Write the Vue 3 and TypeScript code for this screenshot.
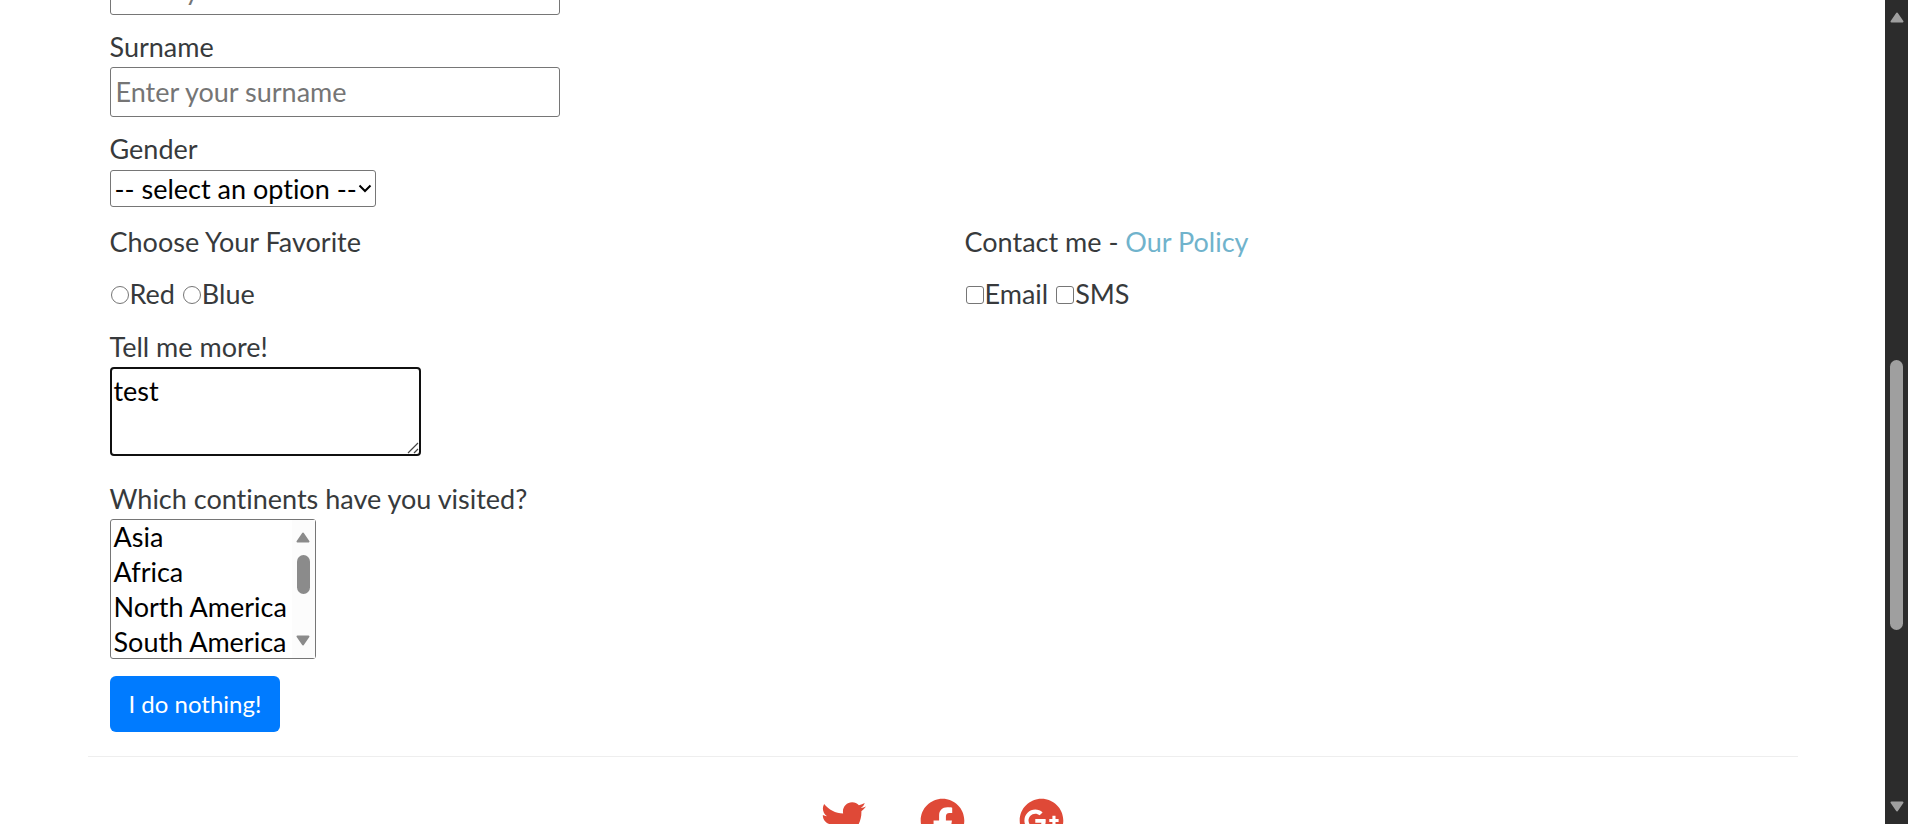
<script setup lang="ts">
import { ref } from 'vue'

const firstName = ref('')
const surname = ref('')
const gender = ref('')
const favorite = ref('')
const contact = ref<string[]>([])
const about = ref('test')
const visited = ref<string[]>([])

const genders = ['Male', 'Female', 'Other']
const colours = ['Red', 'Blue']
const channels = ['Email', 'SMS']
const continents = [
  'Asia', 'Africa', 'North America', 'South America', 'Antarctica',
  'Europe', 'Australia', 'Oceania',
]

const socials = [
  {
    name: 'Twitter',
    path: 'M459.37 151.716c.325 4.548.325 9.097.325 13.645 0 138.72-105.583 298.558-298.558 298.558-59.452 0-114.68-17.219-161.137-47.106 8.447.974 16.568 1.299 25.34 1.299 49.055 0 94.213-16.568 130.274-44.832-46.132-.975-84.792-31.188-98.112-72.772 6.498.974 12.995 1.624 19.818 1.624 9.421 0 18.843-1.3 27.614-3.573-48.081-9.747-84.143-51.98-84.143-102.985v-1.299c13.969 7.797 30.214 12.67 47.431 13.319-28.264-18.843-46.781-51.005-46.781-87.391 0-19.492 5.197-37.36 14.294-52.954 51.655 63.675 129.3 105.258 216.365 109.807-1.624-7.797-2.599-15.918-2.599-24.04 0-57.828 46.782-104.934 104.934-104.934 30.213 0 57.502 12.67 76.67 33.137 23.715-4.548 46.456-13.32 66.599-25.34-7.798 24.366-24.366 44.833-46.132 57.827 21.117-2.273 41.584-8.122 60.426-16.243-14.292 20.791-32.161 39.308-52.628 54.253z',
  },
  {
    name: 'Facebook',
    path: 'M504 256C504 119 393 8 256 8S8 119 8 256c0 123.78 90.69 226.38 209.25 245V327.69h-63V256h63v-54.64c0-62.15 37-96.48 93.67-96.48 27.14 0 55.52 4.84 55.52 4.84v61h-31.28c-30.8 0-40.41 19.12-40.41 38.73V256h68.78l-11 71.69h-57.78V501C413.31 482.38 504 379.78 504 256z',
  },
  {
    name: 'Google Plus',
    path: 'M256,8C119.1,8,8,119.1,8,256S119.1,504,256,504,504,392.9,504,256,392.9,8,256,8ZM185.3,380a124,124,0,0,1,0-248c31.3,0,60.1,11,83,32.3l-33.6,32.6c-13.2-12.9-31.3-19.1-49.4-19.1-42.9,0-77.2,35.5-77.2,78.1S142.3,334,185.3,334c32.6,0,64.9-19.1,70.1-53.3H185.3V238.1H302.2a109.2,109.2,0,0,1,1.9,20.7c0,70.8-47.5,121.2-118.8,121.2ZM415.5,273.8v35.5H380V273.8H344.5V238.3H380V202.8h35.5v35.5h35.2v35.5Z',
  },
]
</script>

<template>
  <div class="window">
    <main class="viewport">
      <div class="container">
        <form class="form" @submit.prevent>
          <input v-model="firstName" class="text-box" type="text" aria-label="Name" placeholder="Enter your name" />

          <div class="group">
            <label for="surname">Surname</label>
            <input id="surname" v-model="surname" class="text-box" type="text" placeholder="Enter your surname" />
          </div>

          <div class="group">
            <label for="gender">Gender</label>
            <div class="drop-down">
              <select id="gender" v-model="gender">
                <option value="" disabled>-- select an option --</option>
                <option v-for="g in genders" :key="g" :value="g">{{ g }}</option>
              </select>
              <svg class="chevron" viewBox="0 0 14 9" aria-hidden="true"><path d="M1.5 1.5 7 7l5.500-5.500" /></svg>
            </div>
          </div>

          <div class="columns">
            <div class="choices" role="radiogroup" aria-labelledby="favorite-title">
              <div id="favorite-title">Choose Your Favorite</div>
              <div>
                <template v-for="c in colours" :key="c">
                  <label class="choice"><input v-model="favorite" class="tick round" type="radio" name="favorite" :value="c" />{{ c }}</label>{{ ' ' }}
                </template>
              </div>
            </div>
            <div class="choices" role="group" aria-labelledby="contact-title">
              <div id="contact-title">Contact me - <a href="#policy">Our Policy</a></div>
              <div>
                <template v-for="c in channels" :key="c">
                  <label class="choice"><input v-model="contact" class="tick" type="checkbox" :value="c" />{{ c }}</label>{{ ' ' }}
                </template>
              </div>
            </div>
          </div>

          <div class="group">
            <label for="about">Tell me more!</label>
            <div class="memo">
              <textarea id="about" v-model="about"></textarea>
              <svg class="grip" viewBox="0 0 12 12" aria-hidden="true"><path d="M1 11 11 1M7 11l4-4" /></svg>
            </div>
          </div>

          <div class="group continents">
            <label for="continents">Which continents have you visited?</label>
            <div class="list">
              <select id="continents" v-model="visited" multiple size="4">
                <option v-for="c in continents" :key="c" :value="c">{{ c }}</option>
              </select>
              <div class="list-bar" aria-hidden="true">
                <svg class="arrow" viewBox="0 0 14 11"><path d="M7 1.500 12.500 9.500h-11z" /></svg>
                <div class="list-track"><div class="list-thumb"></div></div>
                <svg class="arrow" viewBox="0 0 14 11"><path d="M7 9.500 12.500 1.500h-11z" /></svg>
              </div>
            </div>
          </div>

          <button class="submit" type="submit">I do nothing!</button>
        </form>

        <footer class="footer">
          <a v-for="s in socials" :key="s.name" href="#" :aria-label="s.name">
            <svg viewBox="0 0 512 512" aria-hidden="true"><path :d="s.path" /></svg>
          </a>
        </footer>
      </div>
    </main>

    <div class="page-bar" aria-hidden="true">
      <svg class="arrow" viewBox="0 0 14 11"><path d="M7 1.500 12.500 9.500h-11z" /></svg>
      <div class="page-track"><div class="page-thumb"></div></div>
      <svg class="arrow" viewBox="0 0 14 11"><path d="M7 9.500 12.500 1.500h-11z" /></svg>
    </div>
  </div>
</template>

<style>
body {
  margin: 0;
  background: #fff;
}
</style>

<style scoped>
* {
  box-sizing: border-box;
}

.window {
  display: flex;
  height: 100vh;
  overflow: hidden;
  font-family: Lato, sans-serif;
  font-size: 27px;
  font-variant-ligatures: none;
  line-height: 40px;
  color: #373a3c;
}

.viewport {
  flex: 1;
  min-width: 0;
  overflow: hidden;
}

.container {
  max-width: 1710px;
  margin: 0 auto;
}

/* The first field is scrolled partly out of view. */
.form {
  display: flex;
  flex-direction: column;
  align-items: flex-start;
  gap: 12px;
  margin-top: -35px;
  padding: 0 22px 24px;
}

.group {
  display: flex;
  flex-direction: column;
  align-items: flex-start;
}

input,
select,
textarea,
button {
  margin: 0;
  font: inherit;
  font-variant-ligatures: none;
}

.text-box {
  width: 450px;
  height: 50px;
  padding: 0 5px 2px;
  border: 1px solid #767676;
  border-radius: 3px;
  background: #fff;
  color: #000;
}

.text-box::placeholder {
  color: #757575;
  opacity: 1;
}

.drop-down,
.memo,
.list {
  position: relative;
  display: flex;
}

.drop-down {
  padding-top: 1px;
}

.drop-down select {
  appearance: none;
  width: 266px;
  height: 37px;
  padding: 0 0 0 4px;
  border: 1px solid #767676;
  border-radius: 3px;
  background: #fff;
  color: #000;
  line-height: 35px;
}

.chevron {
  position: absolute;
  top: 15px;
  right: 4px;
  width: 14px;
  height: 9px;
  fill: none;
  stroke: #000;
  stroke-width: 2;
  pointer-events: none;
}

.columns {
  display: grid;
  grid-template-columns: 1fr 1fr;
  column-gap: 44px;
  align-self: stretch;
  padding: 3px 0 1px;
}

.choices {
  display: grid;
  row-gap: 12px;
}

.tick {
  appearance: none;
  width: 18px;
  height: 18px;
  margin: 0 1px;
  border: 1px solid #767676;
  border-radius: 3px;
  background: #fff;
  vertical-align: 0;
}

.tick.round {
  border-radius: 50%;
}

.tick:checked {
  border: 6px solid #0075ff;
}

a {
  color: #70b3cc;
  text-decoration: none;
}

.memo textarea {
  display: block;
  width: 311px;
  height: 89px;
  padding: 2px 2px 0;
  border: 2px solid #101010;
  border-radius: 4px;
  outline: none;
  background: #fff;
  color: #000;
  resize: none;
}

.grip {
  position: absolute;
  right: 2px;
  bottom: 2px;
  width: 12px;
  height: 12px;
  fill: none;
  stroke: #444;
  stroke-width: 1.2;
}

.continents {
  padding: 11px 0 5px;
}

.list select {
  width: 206px;
  height: 140px;
  padding: 0;
  border: 1px solid #767676;
  border-radius: 3px;
  outline: none;
  background: #fff;
  color: #000;
  overflow: hidden;
  scrollbar-width: none;
}

.list option {
  min-height: 0;
  height: 35px;
  padding: 0 3px;
  line-height: 35px;
}

.list-bar {
  position: absolute;
  inset: 1px 1px 1px auto;
  display: flex;
  flex-direction: column;
  align-items: center;
  width: 23px;
  padding: 12px 0;
  background: #fcfcfc;
}

.list-track {
  flex: 1;
  padding: 12px 0;
}

.list-thumb {
  width: 13px;
  height: 39px;
  border-radius: 7px;
  background: #8b8b8b;
}

.arrow {
  flex: none;
  width: 14px;
  height: 11px;
  fill: #8b8b8b;
  stroke: #8b8b8b;
  stroke-width: 2;
  stroke-linejoin: round;
}

.submit {
  height: 56px;
  padding: 0 19px;
  border: 0;
  border-radius: 6px;
  background: #007bff;
  color: #fff;
  font-size: 24px;
}

.footer {
  display: flex;
  justify-content: center;
  gap: 54px;
  padding: 41px 0;
  border-top: 1px solid #eee;
}

.footer svg {
  display: block;
  width: 45px;
  height: 45px;
  fill: #df4937;
}

.page-bar {
  display: flex;
  flex: none;
  flex-direction: column;
  align-items: center;
  width: 23px;
  padding: 12px 0;
  background: #2c2c2c;
}

.page-bar .arrow {
  fill: #9f9f9f;
  stroke: #9f9f9f;
}

.page-track {
  display: grid;
  flex: 1;
  grid-template-rows: 337fr 270fr 171fr;
}

.page-thumb {
  grid-row: 2;
  width: 13px;
  border-radius: 7px;
  background: #9f9f9f;
}
</style>
